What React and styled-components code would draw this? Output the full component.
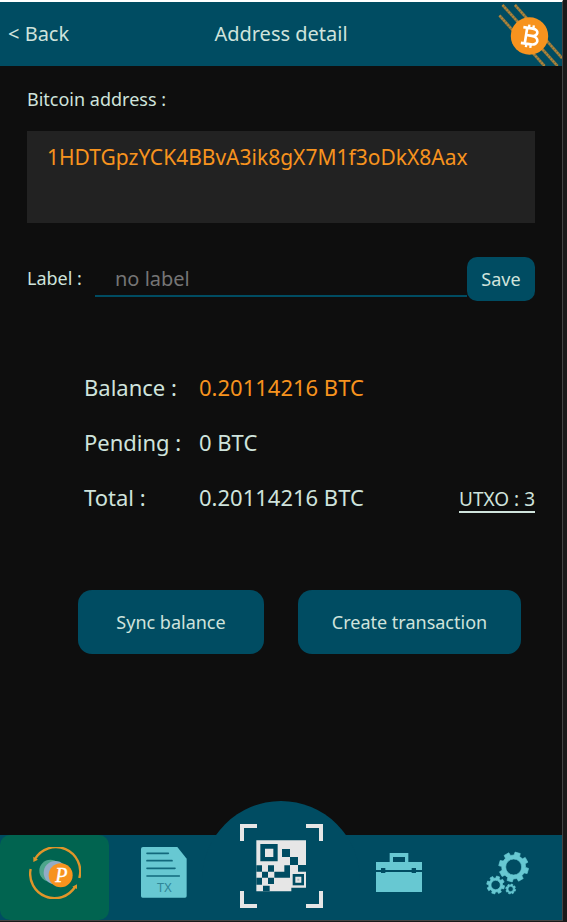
import React from "react";
import styled, { createGlobalStyle } from "styled-components";

const color = {
  bar: "#004c62",
  page: "#0e0e0e",
  panel: "#222222",
  text: "#cfe3dc",
  orange: "#f7931e",
  cyan: "#67c8d2",
  active: "#016450",
  light: "#e6e6e6",
};

const GlobalStyle = createGlobalStyle`
  *, *::before, *::after { box-sizing: border-box; }
  body {
    margin: 0;
    background: #1a1a1a;
    color: ${color.text};
    font-family: "Noto Sans", "Open Sans", sans-serif;
  }
  button, input { font: inherit; color: inherit; }
  h1, p, dl, dd { margin: 0; }
`;

const Screen = styled.div`
  display: flex;
  flex-direction: column;
  min-height: calc(100vh - 1px);
  margin-right: 4px;
  border-top: 2px solid #ffffff;
  border-right: 1px solid #444444;
  border-bottom: 1px solid #444444;
  background: ${color.page};
`;

const Header = styled.header`
  display: grid;
  grid-template-columns: 1fr auto 1fr;
  align-items: center;
  height: 64px;
  background: ${color.bar};
`;

const BackButton = styled.button`
  justify-self: start;
  padding: 0 8px;
  border: 0;
  background: none;
  font-size: 20px;
  line-height: 28px;
  cursor: pointer;
`;

const Title = styled.h1`
  font-size: 20px;
  line-height: 28px;
  font-weight: 400;
`;

const LogoSlot = styled.div`
  display: flex;
  justify-self: end;
`;

const Main = styled.main`
  flex: 1;
  display: flex;
  flex-direction: column;
  padding: 20px 27px 100px;
`;

const Caption = styled.p`
  font-size: 18px;
  line-height: 26px;
`;

const AddressBox = styled.div`
  min-height: 92px;
  margin-top: 19px;
  padding: 12px 20px;
  background: ${color.panel};
  color: ${color.orange};
  font-size: 21px;
  line-height: 28px;
  overflow-wrap: anywhere;
`;

const LabelForm = styled.form`
  display: flex;
  align-items: flex-start;
  margin-top: 34px;
`;

const FieldLabel = styled.label`
  width: 68px;
  font-size: 18px;
  line-height: 42px;
`;

const TextField = styled.input`
  flex: 1;
  min-width: 0;
  height: 40px;
  padding: 4px 20px 0;
  border: 0;
  border-bottom: 2px solid ${color.bar};
  border-radius: 0;
  background: transparent;
  font-size: 20px;
  outline: none;
  &::placeholder { color: #757575; opacity: 1; }
`;

const Button = styled.button`
  height: ${(p) => (p.$large ? 64 : 44)}px;
  padding: 0 ${(p) => (p.$large ? 16 : 12)}px;
  border: 0;
  border-radius: ${(p) => (p.$large ? 14 : 10)}px;
  background: ${color.bar};
  font-size: 18px;
  white-space: nowrap;
  cursor: pointer;
`;

const SaveButton = styled(Button)`
  width: 68px;
`;

const Summary = styled.section`
  display: flex;
  align-items: flex-end;
  justify-content: space-between;
  margin-top: 58px;
  padding-left: 57px;
`;

const Amounts = styled.dl`
  display: grid;
  grid-template-columns: 115px auto;
  grid-auto-rows: 55px;
  align-items: center;
  font-size: 22px;
  line-height: 32px;
  white-space: nowrap;
`;

const Amount = styled.dd`
  color: ${(p) => (p.$accent ? color.orange : "inherit")};
`;

const UtxoLink = styled.a`
  margin-bottom: 11px;
  border-bottom: 2px solid ${color.text};
  color: inherit;
  font-size: 19px;
  line-height: 24px;
  text-decoration: none;
  white-space: nowrap;
`;

const Actions = styled.div`
  display: grid;
  grid-template-columns: 186fr 223fr;
  gap: 34px;
  margin-top: 66px;
  padding: 0 14px 0 51px;
`;

const Nav = styled.nav`
  display: grid;
  grid-template-columns: 1fr 1fr 126px 1fr 1fr;
  grid-template-rows: 85px;
  background: ${color.bar};
`;

const NavButton = styled.button`
  display: flex;
  align-items: center;
  justify-content: center;
  padding: 0 0 10px;
  border: 0;
  border-radius: 10px;
  background: ${(p) => (p.$active ? color.active : "transparent")};
  cursor: pointer;
`;

const ScanButton = styled(NavButton)`
  position: relative;
  padding: 0;
  &::before {
    content: "";
    position: absolute;
    bottom: 0;
    left: 50%;
    width: 158px;
    height: 119px;
    margin-left: -79px;
    border-radius: 79px 79px 0 0;
    background: ${color.bar};
  }
  svg {
    position: relative;
    flex: none;
    margin-bottom: 24px;
  }
`;

function BitcoinLogo() {
  return (
    <svg width="66" height="64" viewBox="0 0 66 64" aria-hidden="true">
      <g stroke="#756f43" strokeWidth="3">
        <path d="M6.5 3 61.5 64M19 3 66 56M3.5 13.500 48.500 64" />
      </g>
      <g stroke="#b58539" strokeWidth="2" strokeDasharray="2 1">
        <path d="M6.5 3 61.5 64M19 3 66 56M3.5 13.500 48.500 64" />
      </g>
      <circle cx="33.500" cy="34" r="18.700" fill={color.orange} />
      <g
        transform="translate(34 34) rotate(9) scale(1.06)"
        fill="none"
        stroke="#fff"
        strokeWidth="2.500"
        strokeLinejoin="round"
      >
        <path d="M-7.500-7.300H1.500C8-7.300 8-.4 1.500-.4H-3.500M1.500-.4C9.500-.4 9.500 7.700 2 7.700H-7.500M-3.800-7.300V7.700" />
        <path d="M-2.200-10.500V-7M2-10.500V-7M-2.200 7.500V11M2 7.500V11" strokeWidth="2.200" />
      </g>
    </svg>
  );
}

function CoinsIcon() {
  return (
    <svg width="52" height="52" viewBox="88 64 156 156" aria-hidden="true">
      <g fill="none" stroke="#e0952a" strokeWidth="7">
        <path d="M106 100A73 73 0 0 1 239 157" />
        <path d="M93 130A73 73 0 0 0 226 184" />
      </g>
      <path d="M101 93V109L115 102ZM232 176V190L218 183Z" fill="#e0952a" />
      <circle cx="152" cy="135" r="33" fill="#4ea58b" />
      <circle cx="167" cy="141" r="35" fill="#93acc6" />
      <circle cx="183" cy="149" r="36" fill={color.orange} />
      <text
        x="185"
        y="168"
        textAnchor="middle"
        fill="#fff"
        stroke="#fff"
        fontFamily="Liberation Serif, serif"
        fontStyle="italic"
        fontSize="60"
      >
        P
      </text>
    </svg>
  );
}

function TransactionIcon() {
  return (
    <svg width="46" height="51" viewBox="64 66 138 153" aria-hidden="true">
      <path
        d="M70 66H173L201 101V213Q201 218 196 218H69Q64 218 64 213V72Q64 66 70 66Z"
        fill={color.cyan}
      />
      <path
        d="M82 85H146M82 107H157M82 130H166M82 153H179"
        stroke="#12687c"
        strokeWidth="5"
        strokeLinecap="round"
      />
      <text
        x="134"
        y="201"
        textAnchor="middle"
        fill="#2f8597"
        fontFamily="Noto Sans, sans-serif"
        fontSize="38"
      >
        TX
      </text>
    </svg>
  );
}

function ScanIcon() {
  return (
    <svg width="83" height="84" viewBox="126 99 249 252" aria-hidden="true">
      <path
        d="M177 105H132V150M324 105H369V150M132 300V345H177M369 300V345H324"
        fill="none"
        stroke={color.light}
        strokeWidth="12"
      />
      <path
        d="M175 148H324V222H300V242H324V290H280V301H175Z"
        fill={color.light}
      />
      <g fill={color.bar}>
        <path d="M187 159H239V211H187ZM252 174H276V198H252ZM276 198H300V222H276Z" />
        <path d="M259 223H276V260H229V242H259ZM210 223H228V242H210ZM175 223H192V242H175Z" />
        <path d="M192 242H210V260H192ZM210 260H228V279H210ZM175 260H192V281H175ZM195 284H215V301H195Z" />
        <path d="M284 249H318V283H284Z" />
      </g>
      <path d="M201 173H226V198H201ZM292 257H310V275H292Z" fill={color.light} />
      <path d="M298 263H304V269H298Z" fill="#a9bcc3" />
    </svg>
  );
}

function ToolboxIcon() {
  return (
    <svg width="46" height="39" viewBox="54 54 138 117" aria-hidden="true">
      <path d="M95 54H151V82H141V66H105V82H95Z" fill={color.cyan} />
      <path d="M54 81H192V105H54ZM54 111H192V171H54Z" fill={color.cyan} />
      <path d="M69 99H82V114H69ZM161 99H174V114H161Z" fill={color.bar} />
    </svg>
  );
}

function gearPath(cx, cy, outer, root, hole) {
  const profile = [
    [-0.24, root],
    [-0.18, outer],
    [0.18, outer],
    [0.24, root],
  ];
  const points = [];
  for (let tooth = 0; tooth < 8; tooth += 1) {
    profile.forEach(([offset, radius]) => {
      const angle = ((tooth + 0.35) * Math.PI) / 4 + offset;
      points.push(`${cx + radius * Math.cos(angle)} ${cy + radius * Math.sin(angle)}`);
    });
  }
  return (
    `M${points.join("L")}Z` +
    `M${cx - hole} ${cy}a${hole} ${hole} 0 1 0 ${hole * 2} 0a${hole} ${hole} 0 1 0 ${-hole * 2} 0Z`
  );
}

function GearsIcon() {
  return (
    <svg width="43" height="44" viewBox="56 63 129 132" aria-hidden="true">
      <g fill={color.cyan} stroke={color.cyan} strokeWidth="2" strokeLinejoin="round" fillRule="evenodd">
        <path d={gearPath(139, 111, 45, 36, 24)} />
        <path d={gearPath(85, 165, 27, 21, 14)} />
        <path d={gearPath(130, 177, 15, 12, 8)} />
      </g>
    </svg>
  );
}

export default function App() {
  return (
    <>
      <GlobalStyle />
      <Screen>
        <Header>
          <BackButton type="button">&lt; Back</BackButton>
          <Title>Address detail</Title>
          <LogoSlot>
            <BitcoinLogo />
          </LogoSlot>
        </Header>
        <Main>
          <Caption>Bitcoin address :</Caption>
          <AddressBox>1HDTGpzYCK4BBvA3ik8gX7M1f3oDkX8Aax</AddressBox>
          <LabelForm onSubmit={(event) => event.preventDefault()}>
            <FieldLabel htmlFor="address-label">Label :</FieldLabel>
            <TextField id="address-label" type="text" placeholder="no label" />
            <SaveButton type="submit">Save</SaveButton>
          </LabelForm>
          <Summary>
            <Amounts>
              <dt>Balance :</dt>
              <Amount $accent>0.20114216 BTC</Amount>
              <dt>Pending :</dt>
              <Amount>0 BTC</Amount>
              <dt>Total :</dt>
              <Amount>0.20114216 BTC</Amount>
            </Amounts>
            <UtxoLink href="#utxo">UTXO : 3</UtxoLink>
          </Summary>
          <Actions>
            <Button type="button" $large>Sync balance</Button>
            <Button type="button" $large>Create transaction</Button>
          </Actions>
        </Main>
        <Nav aria-label="Main">
          <NavButton type="button" $active aria-label="Wallet"><CoinsIcon /></NavButton>
          <NavButton type="button" aria-label="Transactions"><TransactionIcon /></NavButton>
          <ScanButton type="button" aria-label="Scan"><ScanIcon /></ScanButton>
          <NavButton type="button" aria-label="Tools"><ToolboxIcon /></NavButton>
          <NavButton type="button" aria-label="Settings"><GearsIcon /></NavButton>
        </Nav>
      </Screen>
    </>
  );
}
